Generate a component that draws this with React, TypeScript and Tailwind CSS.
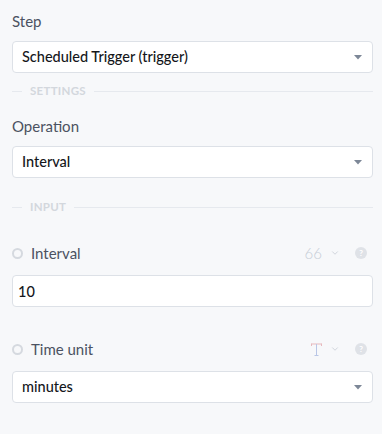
import { ChevronDown } from "lucide-react";

function Caret() {
  return (
    <svg width="8" height="5" viewBox="0 0 8 5" className="text-[#7d8797]">
      <path d="M0 0h8L4 4.5z" fill="currentColor" />
    </svg>
  );
}

function SelectBox({ value }: { value: string }) {
  return (
    <div className="flex h-8 items-center justify-between rounded-sm border border-[#dde1e7] bg-white pl-[9px] pr-[10px]">
      <span className="text-[14.5px] font-medium text-[#15171b]">{value}</span>
      <Caret />
    </div>
  );
}

function Divider({ label }: { label: string }) {
  return (
    <div className="flex h-4 items-center gap-2">
      <div className="h-px w-[10px] bg-[#e6e9ee]" />
      <span className="text-[11.5px] font-bold leading-4 tracking-wide text-[#d3d7dd]">{label}</span>
      <div className="h-px flex-1 bg-[#e6e9ee]" />
    </div>
  );
}

function Help() {
  return (
    <span className="flex h-3 w-3 items-center justify-center rounded-full bg-[#dfe2e7] text-[8px] font-bold text-white">
      ?
    </span>
  );
}

function FieldHead({ label, icon }: { label: string; icon: React.ReactNode }) {
  return (
    <div className="flex h-5 items-center">
      <span className="h-[11px] w-[11px] rounded-full border-2 border-[#d5d9df]" />
      <span className="ml-[8px] text-[15px] text-[#4b5261]">{label}</span>
      <div className="ml-auto flex items-center pr-[6px]">
        {icon}
        <ChevronDown size={10} strokeWidth={2} className="ml-[8px] text-[#c9ced6]" />
        <span className="ml-[15px]">
          <Help />
        </span>
      </div>
    </div>
  );
}

export default function App() {
  return (
    <div
      className="h-[434px] w-[382px] bg-[#f7f8fa] pl-3 pr-[9px] pt-[11px]"
      style={{ fontFamily: "Lato, 'Liberation Sans', sans-serif" }}
    >
      <div className="text-[15px] leading-5 text-[#4b5261]">Step</div>
      <div className="mt-[10px]">
        <SelectBox value="Scheduled Trigger (trigger)" />
      </div>
      <div className="mt-[10px]">
        <Divider label="SETTINGS" />
      </div>
      <div className="mt-[17px] text-[15px] leading-5 text-[#4b5261]">Operation</div>
      <div className="mt-[10px]">
        <SelectBox value="Interval" />
      </div>
      <div className="mt-[21px]">
        <Divider label="INPUT" />
      </div>
      <div className="mt-[28px]">
        <FieldHead
          label="Interval"
          icon={<span className="text-[15px] font-light text-[#c5ccd6]">66</span>}
        />
      </div>
      <input
        readOnly
        value="10"
        className="mt-[12px] block h-8 w-full rounded-sm border border-[#dde1e7] bg-white px-[5px] text-[14.5px] font-medium text-[#15171b] outline-none"
      />
      <div className="mt-[32px]">
        <FieldHead
          label="Time unit"
          icon={
            <svg width="11" height="13" viewBox="0 0 11 13">
              <path d="M0.5 1h10M0.5 0.5v2.5M10.5 0.5v2.5" stroke="#e7b9bd" strokeWidth="1" fill="none" />
              <path d="M5.5 1v11.5M3.5 12.5h4" stroke="#b9c6e6" strokeWidth="1" fill="none" />
            </svg>
          }
        />
      </div>
      <div className="mt-[12px]">
        <SelectBox value="minutes" />
      </div>
    </div>
  );
}
